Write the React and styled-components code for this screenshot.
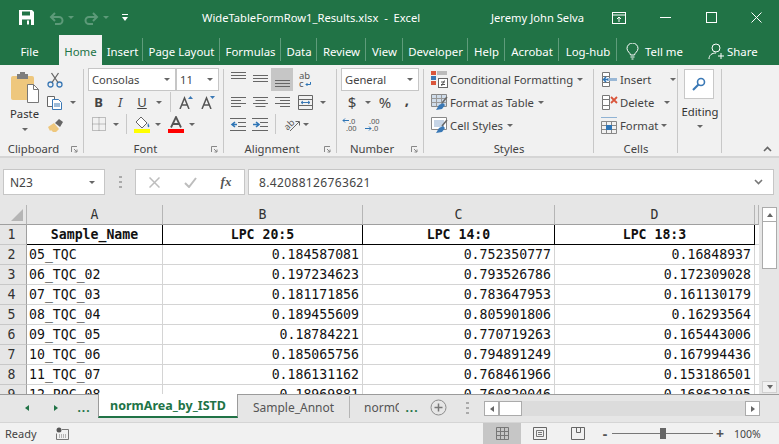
import React from 'react';
import styled, { createGlobalStyle } from 'styled-components';

const GlobalStyle = createGlobalStyle`
  html, body { margin: 0; padding: 0; background: #e6e6e6; }
  body { font-family: "Noto Sans", "Open Sans", sans-serif; overflow: hidden; }
  * { box-sizing: border-box; }
`;

const ui = '"Noto Sans", "Open Sans", sans-serif';
const mono = '"DejaVu Sans Mono", "Liberation Mono", monospace';

const Page = styled.div`
  width: 779px;
  height: 444px;
  display: flex;
  flex-direction: column;
  overflow: hidden;
  background: #e6e6e6;
`;

/* title bar */
const TitleBar = styled.div`
  height: 35px;
  flex: none;
  background: #217346;
  color: #fff;
  display: flex;
  align-items: center;
  font-size: 11.2px;
  & > * { flex: none; }
`;
const Quick = styled.div`
  display: flex;
  align-items: center;
  width: 202px;
  padding-left: 19px;
`;
const QuickBtn = styled.span`
  width: ${p => p.$w}px;
  flex: none;
  display: flex;
  align-items: center;
  justify-content: flex-start;
`;
const DocTitle = styled.div`
  width: 289px;
  white-space: pre;
  padding-bottom: 1px;
`;
const UserName = styled.div`
  width: 104px;
  white-space: nowrap;
  padding-bottom: 1px;
`;
const WinBtn = styled.span`
  width: ${p => p.$w}px;
  display: flex;
  justify-content: center;
`;

/* tabs */
const TabBar = styled.div`
  height: 30px;
  flex: none;
  background: #217346;
  color: #fff;
  display: flex;
  align-items: flex-end;
  font-size: 11.4px;
`;
const Tab = styled.div`
  width: ${p => p.$w}px;
  height: 30px;
  display: flex;
  align-items: center;
  justify-content: center;
  white-space: nowrap;
  position: relative;
  background: ${p => (p.$active ? '#f1f1f1' : 'transparent')};
  color: ${p => (p.$active ? '#217346' : '#fff')};
  padding-top: 2px;
  &::after {
    content: '';
    display: ${p => (p.$sep ? 'block' : 'none')};
    position: absolute;
    right: 0;
    top: 3px;
    bottom: 4px;
    width: 1px;
    background: #5f9c7b;
  }
`;
const TellMe = styled.div`
  display: flex;
  align-items: center;
  gap: 6px;
  margin-left: 9px;
  width: 82px;
  height: 30px;
  padding-top: 2px;
`;
const Share = styled(TellMe)`
  width: 60px;
  margin-left: 0;
  gap: 2px;
`;

/* ribbon */
const Ribbon = styled.div`
  height: 93px;
  flex: none;
  background: #f1f1f1;
  border-bottom: 2px solid #d5d5d5;
  display: flex;
  padding-top: 3px;
  position: relative;
  font-size: 11.3px;
  color: #333;
`;
const Group = styled.div`
  width: ${p => p.$w}px;
  height: 85px;
  flex: none;
  display: flex;
  flex-direction: column;
  position: relative;
  padding-left: ${p => p.$pad || 0}px;
  &::after {
    content: '';
    position: absolute;
    right: 0;
    top: 1px;
    bottom: 0;
    width: 1px;
    background: #c8c8c8;
  }
`;
const GroupBody = styled.div`
  flex: 1;
  display: flex;
  flex-direction: column;
  min-height: 0;
`;
const GroupLabel = styled.div`
  height: 16px;
  line-height: 24px;
  text-align: center;
  font-size: 11.3px;
  color: #444;
  white-space: nowrap;
  margin-left: ${p => -(p.$pad || 0)}px;
  padding-right: ${p => (p.$launch ? 17 : 0)}px;
`;
const Launcher = styled.span`
  position: absolute;
  right: 6px;
  bottom: 0;
  display: flex;
`;
const ToolRow = styled.div`
  height: ${p => p.$h || 22}px;
  display: flex;
  align-items: center;
  flex: none;
`;
const Slot = styled.span`
  width: ${p => p.$w}px;
  height: 100%;
  flex: none;
  display: flex;
  align-items: center;
  justify-content: center;
  background: ${p => (p.$on ? '#c6c6c6' : 'transparent')};
  font-size: ${p => p.$size || 12}px;
  font-weight: ${p => (p.$bold ? 700 : 400)};
  font-style: ${p => (p.$italic ? 'italic' : 'normal')};
  text-decoration: ${p => (p.$under ? 'underline' : 'none')};
  padding-bottom: ${p => p.$lift || 0}px;
  color: #444;
`;
const RowSep = styled.span`
  width: 1px;
  height: 20px;
  background: #c8c8c8;
  flex: none;
  margin: 0 ${p => p.$r || 0}px 0 ${p => p.$l || 0}px;
`;
const Combo = styled.div`
  width: ${p => p.$w}px;
  height: 23px;
  flex: none;
  background: #fff;
  border: 1px solid #c6c6c6;
  display: flex;
  align-items: center;
  justify-content: space-between;
  padding: 0 5px 0 3px;
  color: #444;
  font-size: 11.2px;
`;
const PasteColumn = styled.div`
  width: 46px;
  display: flex;
  flex-direction: column;
  align-items: center;
  padding: 4px 0 0 3px;
`;
const PasteText = styled.div`
  margin-top: 3px;
  line-height: 16px;
`;
const ArrowLine = styled.div`
  height: 14px;
  display: flex;
  align-items: center;
`;
const ClipColumn = styled.div`
  display: flex;
  flex-direction: column;
`;
const ClipBody = styled.div`
  display: flex;
  flex: 1;
`;
const StyleRow = styled.div`
  height: 23px;
  display: flex;
  align-items: center;
  gap: 2px;
  white-space: nowrap;
  color: #444;
`;
const Caret = styled.span`
  width: 0;
  height: 0;
  flex: none;
  border-left: 3px solid transparent;
  border-right: 3px solid transparent;
  border-top: 3px solid ${p => p.$c || '#666'};
  margin-left: ${p => p.$l || 0}px;
`;
const FindBox = styled.div`
  width: 30px;
  height: 30px;
  background: #fff;
  border: 1px solid #c8c8c8;
  display: flex;
  align-items: center;
  justify-content: center;
  margin: 1px 0 0 6px;
`;
const EditingText = styled.div`
  text-align: center;
  margin-top: 5px;
  line-height: 16px;
`;
const CaretLine = styled.div`
  display: flex;
  justify-content: center;
  margin-top: 5px;
`;
const Collapse = styled.span`
  position: absolute;
  right: 7px;
  bottom: 4px;
  display: flex;
`;

/* formula bar */
const FormulaBar = styled.div`
  flex: none;
  height: 47px;
  padding: 11px 5px 10px 3px;
  display: flex;
  background: #e6e6e6;
  color: #444;
  font-size: 12px;
`;
const Field = styled.div`
  height: 26px;
  background: #fff;
  border: 1px solid #c6c6c6;
  display: flex;
  align-items: center;
  flex: ${p => (p.$grow ? 1 : 'none')};
  width: ${p => (p.$w ? `${p.$w}px` : 'auto')};
`;
const NameBox = styled(Field)`
  justify-content: space-between;
  padding: 0 9px 0 6px;
`;
const Grip = styled.div`
  width: 30px;
  display: flex;
  align-items: center;
  justify-content: center;
`;
const FxBox = styled(Field)`
  margin-right: 3px;
`;
const FxSlot = styled.span`
  width: 36px;
  display: flex;
  justify-content: center;
  align-items: center;
  font-family: "Liberation Serif", serif;
  font-style: italic;
  font-weight: 700;
  font-size: 13px;
  color: #555;
`;
const FormulaText = styled(Field)`
  padding: 0 10px;
  justify-content: space-between;
`;
const FormulaValue = styled.span`
  font-family: ${ui};
  font-size: 12px;
  letter-spacing: 0.35px;
`;

/* sheet */
const SheetArea = styled.div`
  flex: 1;
  height: 190px;
  display: flex;
  min-height: 0;
`;
const SheetClip = styled.div`
  width: 759px;
  height: 190px;
  overflow: hidden;
  flex: none;
`;
const SheetGrid = styled.div`
  display: grid;
  grid-template-columns: 27px 136px 200px 192px 200px 4px;
  grid-auto-rows: 20px;
  background: #fff;
  font-family: ${mono};
  font-size: 13.2px;
  color: #111;
`;
const Corner = styled.div`
  background: #e6e6e6;
  border-right: 1px solid #b5b5b5;
  border-bottom: 1px solid #9f9f9f;
  display: flex;
  align-items: flex-end;
  justify-content: flex-end;
  padding: 0 3px 3px 0;
`;
const ColHead = styled.div`
  background: #e6e6e6;
  border-right: 1px solid #b5b5b5;
  border-bottom: 1px solid #9f9f9f;
  text-align: center;
  line-height: 19px;
  color: #333;
`;
const RowHead = styled.div`
  background: #e6e6e6;
  border-right: 1px solid #9f9f9f;
  border-bottom: 1px solid #c8c8c8;
  text-align: center;
  line-height: 19px;
  color: #333;
  padding-right: 3px;
`;
const HeadCell = styled.div`
  border-right: 1px solid #000;
  border-bottom: 1px solid #000;
  font-weight: 700;
  text-align: center;
  line-height: 19px;
  white-space: nowrap;
`;
const Cell = styled.div`
  border-right: 1px solid #d4d4d4;
  border-bottom: 1px solid #d4d4d4;
  line-height: 19px;
  padding: 0 3px 0 2px;
  text-align: ${p => (p.$num ? 'right' : 'left')};
  white-space: nowrap;
  overflow: hidden;
`;
const VScroll = styled.div`
  width: 20px;
  flex: none;
  padding: 2px 2px 1px 3px;
  display: flex;
  flex-direction: column;
  background: #e6e6e6;
`;
const ScrollBtn = styled.div`
  height: ${p => p.$h}px;
  flex: none;
  background: ${p => (p.$flat ? '#f1f1f1' : '#fff')};
  border: 1px solid ${p => (p.$flat ? '#d0d0d0' : '#ababab')};
  display: flex;
  align-items: center;
  justify-content: center;
`;
const VThumb = styled.div`
  height: 47px;
  flex: none;
  background: #fff;
  border: 1px solid #ababab;
  border-top: none;
`;
const VSpace = styled.div`
  flex: 1;
`;

/* sheet tabs */
const SheetTabs = styled.div`
  height: 28px;
  flex: none;
  background: #e6e6e6;
  border-top: 1px solid #9b9b9b;
  display: flex;
  align-items: flex-start;
  font-size: 12px;
  color: #555;
`;
const NavSlot = styled.span`
  width: ${p => p.$w}px;
  height: 25px;
  flex: none;
  display: flex;
  align-items: center;
  justify-content: center;
  color: #217346;
  font-weight: 700;
  letter-spacing: 1px;
  margin-left: ${p => p.$l || 0}px;
`;
const ActiveSheet = styled.div`
  width: 140px;
  height: 24px;
  margin-top: -1px;
  background: #fff;
  border-left: 1px solid #9b9b9b;
  border-right: 1px solid #9b9b9b;
  border-bottom: 2px solid #217346;
  color: #217346;
  font-weight: 700;
  font-size: 12.5px;
  display: flex;
  align-items: center;
  justify-content: center;
  white-space: nowrap;
`;
const SheetTab = styled.div`
  width: ${p => p.$w}px;
  height: 22px;
  margin-top: 1px;
  display: flex;
  align-items: center;
  justify-content: ${p => (p.$clip ? 'flex-start' : 'center')};
  padding-left: ${p => (p.$clip ? 14 : 0)}px;
  white-space: nowrap;
  overflow: hidden;
  border-right: ${p => (p.$sep ? '1px solid #b5b5b5' : 'none')};
`;
const HScroll = styled.div`
  width: 276px;
  height: 15px;
  margin-top: 6px;
  flex: none;
  display: flex;
  background: #dcdcdc;
`;
const HBtn = styled.div`
  width: ${p => p.$w}px;
  flex: none;
  background: #fff;
  border: 1px solid #ababab;
  display: flex;
  align-items: center;
  justify-content: center;
  margin-left: ${p => (p.$end ? 'auto' : 0)};
`;

/* status bar */
const StatusBar = styled.div`
  height: 22px;
  flex: none;
  background: #f1f1f1;
  border-top: 1px solid #d5d5d5;
  display: flex;
  align-items: center;
  font-size: 11px;
  color: #444;
`;
const Ready = styled.div`
  width: 56px;
  padding-left: 5px;
`;
const MacroSlot = styled.div`
  width: 427px;
  display: flex;
`;
const ViewBtn = styled.span`
  width: 38px;
  height: 21px;
  flex: none;
  display: flex;
  align-items: center;
  justify-content: center;
  background: ${p => (p.$on ? '#c6c6c6' : 'transparent')};
`;
const Zoom = styled.div`
  display: flex;
  align-items: center;
  margin-left: 4px;
`;
const ZoomTrack = styled.div`
  width: 101px;
  height: 1px;
  margin: 0 3px;
  background: #777;
  position: relative;
`;
const ZoomThumb = styled.span`
  position: absolute;
  left: 48px;
  top: -5px;
  width: 6px;
  height: 11px;
  background: #666;
`;
const ZoomSign = styled.span`
  width: 8px;
  text-align: center;
  font-size: 14px;
  font-weight: 700;
  line-height: 14px;
  color: #555;
`;
const ZoomValue = styled.span`
  margin-left: 10px;
  font-size: 10.5px;
`;

/* icons */
const Svg = ({ w = 16, h = 16, children }) => (
  <svg width={w} height={h} viewBox={`0 0 ${w} ${h}`} fill="none">{children}</svg>
);
const Tri = ({ dir = 'left', c = '#666', s = 8 }) => {
  const pts = { left: '6,1 2,4 6,7', right: '2,1 6,4 2,7', up: '1,6 4,2 7,6', down: '1,2 4,6 7,2' }[dir];
  return <svg width={s} height={s} viewBox="0 0 8 8"><polygon points={pts} fill={c} /></svg>;
};
const SaveIcon = () => (
  <Svg w={15} h={15}>
    <path d="M0 0h13l2 2v13H0z" fill="#fff" />
    <rect x="3" y="1.500" width="8" height="4" fill="#217346" />
    <rect x="3" y="9.500" width="9" height="5.500" fill="#217346" />
    <rect x="8" y="10.500" width="2" height="4" fill="#fff" />
  </Svg>
);
const UndoIcon = ({ flip }) => (
  <svg width="15" height="14" viewBox="0 0 15 14" fill="none" style={flip ? { transform: 'scaleX(-1)' } : undefined}>
    <path d="M3 6h7a3.500 3.500 0 0 1 0 7H6" stroke="#5d9a79" strokeWidth="2" />
    <path d="M6 2 2 6l4 4" stroke="#5d9a79" strokeWidth="2" />
  </svg>
);
const QatMenu = () => (
  <Svg w={8} h={9}>
    <rect x="1" y="1" width="6" height="1" fill="#fff" />
    <polygon points="1,4 7,4 4,8" fill="#fff" />
  </Svg>
);
const RibbonDisplay = () => (
  <Svg w={14} h={12}>
    <rect x="0.500" y="0.500" width="13" height="11" stroke="#fff" />
    <path d="M0 3h14" stroke="#fff" />
    <path d="M7 10V5M5 7l2-2 2 2" stroke="#fff" />
  </Svg>
);
const MinIcon = () => <Svg w={11} h={11}><path d="M0 5.500h11" stroke="#fff" /></Svg>;
const MaxIcon = () => <Svg w={11} h={11}><rect x="0.500" y="0.500" width="10" height="10" stroke="#fff" /></Svg>;
const CloseIcon = () => <Svg w={11} h={11}><path d="M.5.500l10 10M10.500.500l-10 10" stroke="#fff" /></Svg>;
const BulbIcon = () => (
  <Svg w={13} h={17}>
    <path d="M4.500 12c0-2-3.500-3.500-3.500-6.500a5.500 5.500 0 0 1 11 0C12 8.500 8.500 10 8.500 12z" stroke="#fff" />
    <path d="M4.500 14h4M5.500 16h2" stroke="#fff" />
  </Svg>
);
const PersonIcon = () => (
  <Svg w={17} h={16}>
    <circle cx="8" cy="5" r="4" stroke="#fff" />
    <path d="M1 16c0-4 3-6 7-6" stroke="#fff" />
    <path d="M10 13h6M13 10v6" stroke="#fff" />
  </Svg>
);
const PasteIcon = () => (
  <Svg w={30} h={31}>
    <rect x="1" y="4" width="23" height="24" rx="2" fill="#eec77d" />
    <rect x="7" y="2" width="11" height="5" fill="#7e7e7e" />
    <rect x="10" y="0" width="5" height="3" fill="#7e7e7e" />
    <path d="M17.500 12.500h6l5 5v13h-11z" fill="#fff" stroke="#777" />
    <path d="M23.500 12.500v5h5" stroke="#777" />
  </Svg>
);
const ScissorsIcon = () => (
  <Svg w={16} h={16}>
    <circle cx="3.500" cy="12.500" r="2.500" stroke="#3a78b5" strokeWidth="1.300" />
    <circle cx="12.500" cy="12.500" r="2.500" stroke="#3a78b5" strokeWidth="1.300" />
    <path d="M5 10.500 11.500 1M11 10.500 4.500 1" stroke="#666" strokeWidth="1.300" />
  </Svg>
);
const CopyIcon = () => (
  <Svg w={16} h={15}>
    <path d="M.5 1.500h7v10h-7z" fill="#fff" stroke="#666" />
    <path d="M5.500 4.500h6l3 3v7h-9z" fill="#fff" stroke="#3a78b5" />
    <path d="M7 9h6M7 11h6" stroke="#3a78b5" />
  </Svg>
);
const BrushIcon = () => (
  <Svg w={17} h={15}>
    <path d="M1 9l6-4 5 6-3 3H6L4 12l-1 1z" fill="#eec77d" />
    <path d="M8 5l4-4 4 3-3 5z" fill="#666" />
  </Svg>
);
const BorderIcon = () => (
  <Svg w={14} h={14}>
    <path d="M.5.500h13v13H.5zM7 .5v13M.5 7h13" stroke="#888" strokeDasharray="1 1" />
  </Svg>
);
const FillIcon = () => (
  <Svg w={17} h={17}>
    <path d="M7 1l6 6-5 5-6-6z" fill="#fff" stroke="#666" />
    <path d="M14 7c1 2 2 3 1 4s-2-1-1-4z" fill="#3a78b5" />
    <rect x="0" y="13" width="16" height="4" fill="#ffff00" />
  </Svg>
);
const ColorA = () => (
  <Svg w={16} h={17}>
    <path d="M3 11.500 8 1l5 10.500M5 8h6" stroke="#555" strokeWidth="1.800" />
    <rect x="0" y="13" width="16" height="4" fill="#ff0000" />
  </Svg>
);
const GrowA = ({ down }) => (
  <Svg w={14} h={14}>
    <path d="M1 14 5.500 3 10 14M3 10h5" stroke="#555" strokeWidth="1.500" />
    <polygon points={down ? '9,1 14,1 11.500,4' : '9,4 14,4 11.500,1'} fill="#3a78b5" />
  </Svg>
);
const AlignV = ({ pos }) => {
  const lines = { top: [0, 3, 6], mid: [3, 6, 9], bot: [8, 11, 14] }[pos];
  return (
    <Svg w={15} h={15}>
      {lines.map(y => <path key={y} d={`M0 ${y + 0.5}h15`} stroke="#666" />)}
    </Svg>
  );
};
const AlignH = ({ pos }) => {
  const widths = [15, 10, 15, 10];
  return (
    <Svg w={15} h={11}>
      {widths.map((w, i) => {
        const x = pos === 'l' ? 0 : pos === 'c' ? (15 - w) / 2 : 15 - w;
        return <path key={i} d={`M${x} ${i * 3 + 0.5}h${w}`} stroke="#666" />;
      })}
    </Svg>
  );
};
const WrapIcon = () => (
  <svg width="13" height="17" viewBox="0 0 13 17" fill="none">
    <text x="0" y="8" fontSize="9.500" fontFamily={ui} fill="#555">ab</text>
    <text x="0" y="16" fontSize="9.500" fontFamily={ui} fill="#555">c</text>
    <path d="M11.500 11v2.500H7M8.500 12 7 13.500 8.500 15" stroke="#2e75b6" />
  </svg>
);
const MergeIcon = () => (
  <Svg w={15} h={15}>
    <path d="M.5.500h14v14H.5zM.5 4.500h14M.5 10.500h14" stroke="#666" />
    <path d="M3 7.500h9" stroke="#3a78b5" />
    <path d="M5 6 3 7.500 5 9M10 6l2 1.500L10 9" stroke="#3a78b5" />
  </Svg>
);
const IndentIcon = ({ flip }) => (
  <Svg w={16} h={13}>
    <path d="M0 .5h16M8 4.500h8M8 8.500h8M0 12.500h16" stroke="#666" />
    {flip
      ? <path d="M1 6.500h5M4 4l3 2.500L4 9" stroke="#2e75b6" strokeWidth="1.600" />
      : <path d="M2 6.500h5M5 4 2 6.500 5 9" stroke="#2e75b6" strokeWidth="1.600" />}
  </Svg>
);
const OrientIcon = () => (
  <svg width="16" height="16" viewBox="0 0 16 16" fill="none">
    <text x="0" y="12" fontSize="9" fontFamily={ui} fill="#555" transform="rotate(-45 5 9)">ab</text>
    <path d="M6 15 15 6M11.500 5.500h4v4" stroke="#666" />
  </svg>
);
const DecIcon = ({ more }) => (
  <svg width="16" height="15" viewBox="0 0 16 15">
    <text x={more ? 4 : 7} y="7" fontSize="7.500" fontFamily={ui} fill="#555">{more ? '.00' : '.0'}</text>
    <text x={more ? 7 : 4} y="14" fontSize="7.500" fontFamily={ui} fill="#555">{more ? '.0' : '.00'}</text>
    <path d={more ? 'M0 11.500h6M4 9.500l2 2-2 2' : 'M1 3.500h6M3 1.500l-2 2 2 2'} stroke="#2e75b6" fill="none" />
  </svg>
);
const CondIcon = () => (
  <Svg w={17} h={17}>
    <rect x="0" y="0" width="5" height="4" fill="#d9553b" />
    <rect x="6" y="0" width="10" height="4" fill="#bbb" />
    <rect x="0" y="5" width="5" height="4" fill="#3a78b5" />
    <rect x="0" y="10" width="5" height="4" fill="#d9553b" />
    <rect x="7.500" y="7.500" width="9" height="9" fill="#fff" stroke="#666" />
    <path d="M10 11h4M10 13.500h4M13.500 9.500l-3 5.500" stroke="#555" />
  </Svg>
);
const TableIcon = () => (
  <Svg w={17} h={17}>
    <path d="M.5.500h15v12H.5z" fill="#cfdcea" stroke="#888" />
    <path d="M.5 4.500h15M.5 8.500h15M5.500.5v12M10.500.5v12" stroke="#999" />
    <path d="M5 16l3-5 4-2 2 2-3 4z" fill="#3a78b5" />
    <path d="M11 9l5-6" stroke="#666" strokeWidth="1.500" />
  </Svg>
);
const CellStyleIcon = () => (
  <Svg w={17} h={17}>
    <path d="M.5.500h15v12H.5z" fill="#fff" stroke="#888" />
    <rect x="3" y="3" width="10" height="7" fill="#c5d4e6" />
    <path d="M5 16l3-5 4-2 2 2-3 4z" fill="#3a78b5" />
    <path d="M11 9l5-6" stroke="#666" strokeWidth="1.500" />
  </Svg>
);
const CellsIcon = ({ kind }) => (
  <Svg w={17} h={17}>
    <path d="M1.500 1.500h7v4h-7zM1.500 11.500h7v4h-7zM1.500 5.500h7v6h-7z" stroke="#777" fill="#fff" />
    {kind === 'ins' && <path d="M6 7h10v3H6z" fill="#9ab8d6" />}
    {kind === 'ins' && <path d="M7 8.500h-4M5 6l-2.500 2.500L5 11" stroke="#2e75b6" strokeWidth="1.500" />}
    {kind === 'del' && <path d="M10 3l6 6M16 3l-6 6" stroke="#d9553b" strokeWidth="1.800" />}
  </Svg>
);
const FormatIcon = () => (
  <Svg w={17} h={17}>
    <path d="M.5.500h16" stroke="#2e75b6" strokeDasharray="1 1" />
    <path d="M.5 4.500h15v12H.5zM.5 8.500h15M.5 12.500h15M5.500 4.500v12M10.500 4.500v12" stroke="#888" />
    <rect x="5" y="8" width="6" height="5" fill="#2e75b6" />
  </Svg>
);
const SearchIcon = () => (
  <Svg w={14} h={14}>
    <circle cx="9" cy="5" r="3.500" stroke="#3a78b5" strokeWidth="1.600" />
    <path d="M6.500 7.500 1 13" stroke="#3a78b5" strokeWidth="2.200" />
  </Svg>
);
const LauncherIcon = () => (
  <Svg w={7} h={7}>
    <path d="M.5 6V.5H6" stroke="#888" />
    <path d="M3 3l3 3M6 3.500V6H3.500" stroke="#888" />
  </Svg>
);
const Chevron = ({ up, c = '#777' }) => (
  <Svg w={9} h={6}>
    <path d={up ? 'M1 5l3.500-3.500L8 5' : 'M1 1l3.500 3.500L8 1'} stroke={c} strokeWidth="1.600" />
  </Svg>
);
const GripDots = () => (
  <Svg w={3} h={12}>
    <path d="M0 1h3M0 6h3M0 11h3" stroke="#aaa" strokeWidth="2" />
  </Svg>
);
const CrossIcon = () => <Svg w={11} h={11}><path d="M.5.500l10 10M10.500.500l-10 10" stroke="#bdbdbd" strokeWidth="1.500" /></Svg>;
const CheckIcon = () => <Svg w={13} h={11}><path d="M1 6l4 4 7-9" stroke="#bdbdbd" strokeWidth="2" /></Svg>;
const CornerTri = () => <Svg w={12} h={12}><polygon points="12,0 12,12 0,12" fill="#b5b5b5" /></Svg>;
const PlusCircle = () => (
  <Svg w={17} h={17}>
    <circle cx="8.500" cy="8.500" r="7.500" stroke="#8c8c8c" />
    <path d="M4.500 8.500h8M8.500 4.500v8" stroke="#777" strokeWidth="1.500" />
  </Svg>
);
const MacroIcon = () => (
  <Svg w={13} h={13}>
    <circle cx="3" cy="3" r="2.500" fill="#555" />
    <path d="M6 2.500h6.500v10H.5V6.500" stroke="#777" />
    <path d="M3 8h7M3 10h7" stroke="#777" strokeDasharray="1 1" />
  </Svg>
);
const NormalView = () => (
  <Svg w={13} h={13}>
    <path d="M.5.500h12v12H.5zM.5 4.500h12M.5 8.500h12M4.500.5v12M8.500.5v12" stroke="#777" />
  </Svg>
);
const PageView = () => (
  <Svg w={14} h={13}>
    <path d="M.5.500h13v12H.5z" stroke="#666" />
    <path d="M3.500 3.500h7v6h-7zM5 5.500h4M5 7.500h4" stroke="#777" />
  </Svg>
);
const BreakView = () => (
  <Svg w={14} h={13}>
    <path d="M.5.500h13v12H.5zM5.500.5v5h4V.5" stroke="#666" />
  </Svg>
);

const tabs = [
  ['File', 59], ['Home', 43, 'active'], ['Insert', 41, 'sep'], ['Page Layout', 77, 'sep'],
  ['Formulas', 61, 'sep'], ['Data', 36, 'sep'], ['Review', 49, 'sep'], ['View', 37, 'sep'],
  ['Developer', 65, 'sep'], ['Help', 37, 'sep'], ['Acrobat', 54, 'sep'], ['Log-hub', 58, 'sep'],
];

const rows = [
  ['05_TQC', '0.184587081', '0.752350777', '0.16848937'],
  ['06_TQC_02', '0.197234623', '0.793526786', '0.172309028'],
  ['07_TQC_03', '0.181171856', '0.783647953', '0.161130179'],
  ['08_TQC_04', '0.189455609', '0.805901806', '0.16293564'],
  ['09_TQC_05', '0.18784221', '0.770719263', '0.165443006'],
  ['10_TQC_06', '0.185065756', '0.794891249', '0.167994436'],
  ['11_TQC_07', '0.186131162', '0.768461966', '0.153186501'],
  ['12_POC_08', '0.18969881', '0.760820046', '0.168628195'],
];

const Sheet = () => (
  <SheetGrid>
    <Corner><CornerTri /></Corner>
    {['A', 'B', 'C', 'D', ''].map((c, i) => <ColHead key={i}>{c}</ColHead>)}
    <RowHead>1</RowHead>
    {['Sample_Name', 'LPC 20:5', 'LPC 14:0', 'LPC 18:3'].map(h => <HeadCell key={h}>{h}</HeadCell>)}
    <Cell />
    {rows.map((r, i) => (
      <React.Fragment key={r[0]}>
        <RowHead>{i + 2}</RowHead>
        <Cell>{r[0]}</Cell>
        <Cell $num>{r[1]}</Cell>
        <Cell $num>{r[2]}</Cell>
        <Cell $num>{r[3]}</Cell>
        <Cell />
      </React.Fragment>
    ))}
  </SheetGrid>
);

export default function App() {
  return (
    <Page>
      <GlobalStyle />
      <TitleBar>
        <Quick>
          <QuickBtn $w={30}><SaveIcon /></QuickBtn>
          <QuickBtn $w={19}><UndoIcon /></QuickBtn>
          <QuickBtn $w={16}><Caret $c="#5d9a79" /></QuickBtn>
          <QuickBtn $w={19}><UndoIcon flip /></QuickBtn>
          <QuickBtn $w={18}><Caret $c="#5d9a79" /></QuickBtn>
          <QuickBtn $w={10}><QatMenu /></QuickBtn>
        </Quick>
        <DocTitle>WideTableFormRow1_Results.xlsx  -  Excel</DocTitle>
        <UserName>Jeremy John Selva</UserName>
        <WinBtn $w={47}><RibbonDisplay /></WinBtn>
        <WinBtn $w={46}><MinIcon /></WinBtn>
        <WinBtn $w={46}><MaxIcon /></WinBtn>
        <WinBtn $w={45}><CloseIcon /></WinBtn>
      </TitleBar>

      <TabBar>
        {tabs.map(([t, w, k]) => (
          <Tab key={t} $w={w} $active={k === 'active'} $sep={k === 'sep'}>{t}</Tab>
        ))}
        <TellMe><BulbIcon />Tell me</TellMe>
        <Share><PersonIcon />Share</Share>
      </TabBar>

      <Ribbon>
        <Group $w={84}>
          <GroupBody>
            <ClipBody>
              <PasteColumn>
                <PasteIcon />
                <PasteText>Paste</PasteText>
                <ArrowLine><Caret /></ArrowLine>
              </PasteColumn>
              <ClipColumn>
                <ToolRow $h={23}><Slot $w={18}><ScissorsIcon /></Slot></ToolRow>
                <ToolRow $h={23}><Slot $w={18}><CopyIcon /></Slot><Caret $l={6} /></ToolRow>
                <ToolRow $h={23}><Slot $w={18}><BrushIcon /></Slot></ToolRow>
              </ClipColumn>
            </ClipBody>
          </GroupBody>
          <GroupLabel $launch>Clipboard</GroupLabel>
          <Launcher><LauncherIcon /></Launcher>
        </Group>

        <Group $w={140} $pad={4}>
          <GroupBody>
            <ToolRow $h={23}>
              <Combo $w={88}>Consolas<Caret /></Combo>
              <Combo $w={43}>11<Caret /></Combo>
            </ToolRow>
            <ToolRow>
              <Slot $w={21} $bold $size={13}>B</Slot>
              <Slot $w={22} $italic $size={13}>I</Slot>
              <Slot $w={22} $under $size={13}>U</Slot>
              <Slot $w={12}><Caret /></Slot>
              <RowSep $l={5} $r={7} />
              <Slot $w={16}><GrowA /></Slot>
              <Slot $w={28}><GrowA down /></Slot>
            </ToolRow>
            <ToolRow>
              <Slot $w={21}><BorderIcon /></Slot>
              <Slot $w={13}><Caret /></Slot>
              <RowSep $l={4} $r={7} />
              <Slot $w={17}><FillIcon /></Slot>
              <Slot $w={14}><Caret /></Slot>
              <Slot $w={21}><ColorA /></Slot>
              <Slot $w={11}><Caret /></Slot>
            </ToolRow>
          </GroupBody>
          <GroupLabel $pad={4} $launch>Font</GroupLabel>
          <Launcher><LauncherIcon /></Launcher>
        </Group>

        <Group $w={113} $pad={3}>
          <GroupBody>
            <ToolRow $h={23}>
              <Slot $w={22}><AlignV pos="top" /></Slot>
              <Slot $w={22}><AlignV pos="mid" /></Slot>
              <Slot $w={22} $on><AlignV pos="bot" /></Slot>
              <Slot $w={24}><WrapIcon /></Slot>
            </ToolRow>
            <ToolRow>
              <Slot $w={22}><AlignH pos="l" /></Slot>
              <Slot $w={22}><AlignH pos="c" /></Slot>
              <Slot $w={22}><AlignH pos="r" /></Slot>
              <Slot $w={24}><MergeIcon /></Slot>
              <Slot $w={12}><Caret /></Slot>
            </ToolRow>
            <ToolRow>
              <Slot $w={22}><IndentIcon /></Slot>
              <Slot $w={22}><IndentIcon flip /></Slot>
              <RowSep $l={4} $r={7} />
              <Slot $w={18}><OrientIcon /></Slot>
              <Slot $w={10}><Caret /></Slot>
            </ToolRow>
          </GroupBody>
          <GroupLabel $pad={3} $launch>Alignment</GroupLabel>
          <Launcher><LauncherIcon /></Launcher>
        </Group>

        <Group $w={87} $pad={4}>
          <GroupBody>
            <ToolRow $h={23}><Combo $w={78}>General<Caret /></Combo></ToolRow>
            <ToolRow>
              <Slot $w={22} $size={15}>$</Slot>
              <Slot $w={10}><Caret /></Slot>
              <Slot $w={24} $size={15}>%</Slot>
              <Slot $w={20} $bold $size={15} $lift={6}>,</Slot>
            </ToolRow>
            <ToolRow>
              <Slot $w={18}><DecIcon /></Slot>
              <Slot $w={28}><DecIcon more /></Slot>
            </ToolRow>
          </GroupBody>
          <GroupLabel $pad={4} $launch>Number</GroupLabel>
          <Launcher><LauncherIcon /></Launcher>
        </Group>

        <Group $w={170} $pad={7}>
          <GroupBody>
            <StyleRow><CondIcon />Conditional Formatting<Caret $l={2} /></StyleRow>
            <StyleRow><TableIcon />Format as Table<Caret $l={2} /></StyleRow>
            <StyleRow><CellStyleIcon />Cell Styles<Caret $l={2} /></StyleRow>
          </GroupBody>
          <GroupLabel $pad={7}>Styles</GroupLabel>
        </Group>

        <Group $w={84} $pad={7}>
          <GroupBody>
            <StyleRow><CellsIcon kind="ins" />Insert<Caret $l={17} /></StyleRow>
            <StyleRow><CellsIcon kind="del" />Delete<Caret $l={8} /></StyleRow>
            <StyleRow><FormatIcon />Format<Caret $l={1} /></StyleRow>
          </GroupBody>
          <GroupLabel $pad={7}>Cells</GroupLabel>
        </Group>

        <Group $w={44}>
          <GroupBody>
            <FindBox><SearchIcon /></FindBox>
            <EditingText>Editing</EditingText>
            <CaretLine><Caret /></CaretLine>
          </GroupBody>
        </Group>
        <Collapse><Chevron up c="#666" /></Collapse>
      </Ribbon>

      <FormulaBar>
        <NameBox $w={102}>N23<Caret /></NameBox>
        <Grip><GripDots /></Grip>
        <FxBox $w={110}>
          <FxSlot><CrossIcon /></FxSlot>
          <FxSlot><CheckIcon /></FxSlot>
          <FxSlot>fx</FxSlot>
        </FxBox>
        <FormulaText $grow>
          <FormulaValue>8.42088126763621</FormulaValue>
          <Chevron />
        </FormulaText>
      </FormulaBar>

      <SheetArea>
        <SheetClip><Sheet /></SheetClip>
        <VScroll>
          <ScrollBtn $h={15}><Tri dir="up" /></ScrollBtn>
          <VThumb />
          <VSpace />
          <ScrollBtn $h={12} $flat><Tri dir="down" /></ScrollBtn>
        </VScroll>
      </SheetArea>

      <SheetTabs>
        <NavSlot $l={12} $w={30}><Tri dir="left" c="#217346" /></NavSlot>
        <NavSlot $w={28}><Tri dir="right" c="#217346" /></NavSlot>
        <NavSlot $w={28}>...</NavSlot>
        <ActiveSheet>normArea_by_ISTD</ActiveSheet>
        <SheetTab $w={112} $sep>Sample_Annot</SheetTab>
        <SheetTab $w={49} $clip>normQ</SheetTab>
        <NavSlot $w={26}>...</NavSlot>
        <NavSlot $w={26}><PlusCircle /></NavSlot>
        <NavSlot $w={33}><GripDots /></NavSlot>
        <HScroll>
          <HBtn $w={15}><Tri dir="left" /></HBtn>
          <HBtn $w={23} />
          <HBtn $w={15} $end><Tri dir="right" /></HBtn>
        </HScroll>
      </SheetTabs>

      <StatusBar>
        <Ready>Ready</Ready>
        <MacroSlot><MacroIcon /></MacroSlot>
        <ViewBtn $on><NormalView /></ViewBtn>
        <ViewBtn><PageView /></ViewBtn>
        <ViewBtn><BreakView /></ViewBtn>
        <Zoom>
          <ZoomSign>-</ZoomSign>
          <ZoomTrack><ZoomThumb /></ZoomTrack>
          <ZoomSign>+</ZoomSign>
          <ZoomValue>100%</ZoomValue>
        </Zoom>
      </StatusBar>
    </Page>
  );
}
